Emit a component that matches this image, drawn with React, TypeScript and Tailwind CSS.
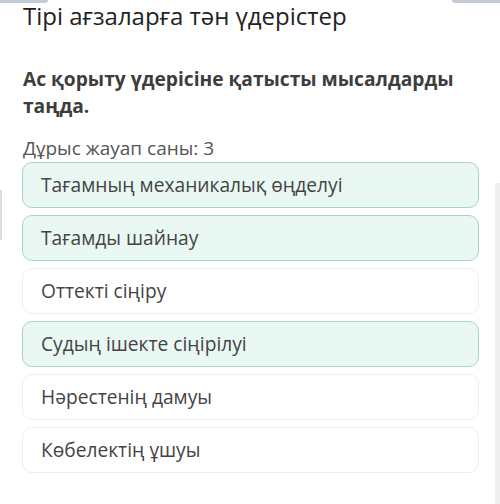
import React from "react";

const options = [
  { text: "Тағамның механикалық өңделуі", selected: true },
  { text: "Тағамды шайнау", selected: true },
  { text: "Оттекті сіңіру", selected: false },
  { text: "Судың ішекте сіңірілуі", selected: true },
  { text: "Нәрестенің дамуы", selected: false },
  { text: "Көбелектің ұшуы", selected: false },
];

export default function App() {
  return (
    <div
      className="relative w-[500px] h-[504px] overflow-hidden bg-white"
      style={{ fontFamily: '"Open Sans", "Noto Sans", sans-serif' }}
    >
      <div className="absolute left-0 top-0 h-[3px] w-[48px] rounded-br-full bg-[#c3ccd6]" />
      <div className="absolute right-0 top-0 h-[3px] w-[48px] rounded-bl-full bg-[#c3ccd6]" />
      <div className="absolute left-0 top-[190px] h-[50px] w-[2px] bg-[#dcdcdc]" />
      <div className="absolute right-0 top-[183px] bottom-0 w-[5px] bg-[#efefef]" />

      <div className="flex flex-col pl-[23px] pr-[21px]">
        <h1 className="pt-[1px] text-[24px] leading-[30px] font-normal text-[#222]">
          Тірі ағзаларға тән үдерістер
        </h1>
        <p className="mt-[34px] text-[19.2px] leading-[27px] font-bold text-[#3d3d3d]">
          Ас қорыту үдерісіне қатысты мысалдарды таңда.
        </p>
        <p className="mt-[17px] text-[19px] leading-[24px] text-[#555]">
          Дұрыс жауап саны: 3
        </p>
        <div className="mt-[2px] flex flex-col gap-[7px] -ml-[1px]">
          {options.map((o) => (
            <div
              key={o.text}
              className={
                o.selected
                  ? "flex h-[46px] items-center rounded-[10px] border border-[#a9d2c8] bg-[#eaf8f4] pl-[18px] text-[19.2px] text-[#444]"
                  : "flex h-[46px] items-center rounded-[10px] border border-[#eeeeee] bg-white pl-[18px] text-[19.2px] text-[#444]"
              }
            >
              {o.text}
            </div>
          ))}
        </div>
      </div>
    </div>
  );
}
